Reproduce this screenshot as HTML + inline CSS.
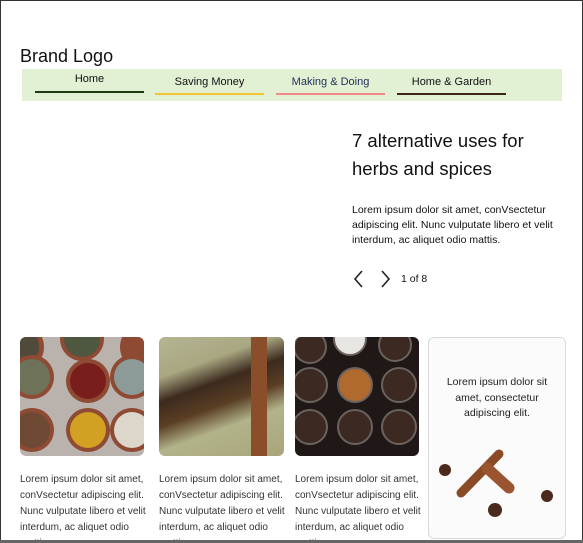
<!DOCTYPE html>
<html><head><style>
*{margin:0;padding:0;box-sizing:border-box}
body{width:583px;height:543px;overflow:hidden;background:#fff;font-family:"Liberation Sans",sans-serif;color:#111;position:relative}
.frame{position:absolute;left:0;top:0;width:583px;height:541px;border:1px solid #333;border-bottom:none}
.bot{position:absolute;left:0;top:540px;width:583px;height:3px;background:#666}
.abs{position:absolute}
.logo{left:20px;top:46px;font-size:18px}
.nav{left:22px;top:69px;width:540px;height:32px;background:#e2f0d4}
.ni{position:absolute;top:6px;width:109px;text-align:center;font-size:11px;height:20px;border-bottom:2px solid}
.t{left:352px;top:127px;font-size:18.5px;line-height:28px;width:200px}
.p{left:352px;top:203px;font-size:10.5px;line-height:15px;width:210px}
.img{top:337px;height:119px;border-radius:6px;overflow:hidden}
.cap{top:472px;font-size:10px;line-height:16px;color:#333;width:128px;height:68px;overflow:hidden}
</style></head><body>
<div class="frame"></div>
<div class="abs logo">Brand Logo</div>
<div class="abs nav">
<div class="ni" style="left:13px;border-color:#1a3a12;top:4px">Home</div>
<div class="ni" style="left:133px;border-color:#f2c531;top:7px;height:19px">Saving Money</div>
<div class="ni" style="left:254px;border-color:#f08a8a;color:#1e2e5a;top:7px;height:19px">Making &amp; Doing</div>
<div class="ni" style="left:375px;border-color:#3b2318;top:7px;height:19px">Home &amp; Garden</div>
</div>
<div class="abs t">7 alternative uses for herbs and spices</div>
<div class="abs p">Lorem ipsum dolor sit amet, conVsectetur adipiscing elit. Nunc vulputate libero et velit interdum, ac aliquet odio mattis.</div>
<svg class="abs" style="left:350px;top:269px" width="50" height="20"><path d="M12 2 L5 10 L12 18" fill="none" stroke="#222" stroke-width="1.6"/><path d="M32 2 L39 10 L32 18" fill="none" stroke="#222" stroke-width="1.6"/></svg>
<div class="abs" style="left:401px;top:273px;font-size:10.5px">1 of 8</div>

<div class="abs img" style="left:20px;width:124px;background:#b9b2ad">
<svg width="124" height="119"><g>
<circle cx="0" cy="10" r="24" fill="#8e4a32"/><circle cx="0" cy="10" r="19" fill="#4f4a3a"/>
<circle cx="62" cy="2" r="22" fill="#8e4a32"/><circle cx="62" cy="2" r="18" fill="#4e5740"/>
<circle cx="124" cy="10" r="24" fill="#8e4a32"/>
<circle cx="12" cy="40" r="22" fill="#8e4a32"/><circle cx="12" cy="40" r="18" fill="#6d7258"/>
<circle cx="68" cy="44" r="22" fill="#8e4a32"/><circle cx="68" cy="44" r="18" fill="#7a1e1c"/>
<circle cx="112" cy="40" r="22" fill="#8e4a32"/><circle cx="112" cy="40" r="18" fill="#8c9a98"/>
<circle cx="12" cy="93" r="22" fill="#8e4a32"/><circle cx="12" cy="93" r="18" fill="#6e4a35"/>
<circle cx="68" cy="93" r="22" fill="#8e4a32"/><circle cx="68" cy="93" r="18" fill="#d2a022"/>
<circle cx="112" cy="93" r="22" fill="#8e4a32"/><circle cx="112" cy="93" r="18" fill="#ddd6ca"/>
</g></svg></div>
<div class="abs img" style="left:159px;width:125px;background:linear-gradient(160deg,#b5b592 0%,#a9a782 25%,#3c2a1e 40%,#5a3e24 55%,#b2b38a 70%,#a9a57a 100%)">
<div class="abs" style="left:92px;top:0;width:16px;height:119px;background:#8a4e2b"></div></div>
<div class="abs img" style="left:295px;width:124px;background:#1f1816">
<svg width="124" height="119"><g fill="#3c2a22" stroke="#6a625e" stroke-width="2">
<circle cx="15" cy="10" r="16"/><circle cx="55" cy="2" r="16" fill="#e8e6e2"/><circle cx="100" cy="8" r="16"/>
<circle cx="15" cy="48" r="17"/><circle cx="60" cy="48" r="17" fill="#b06a2e"/><circle cx="104" cy="48" r="17"/>
<circle cx="15" cy="90" r="17"/><circle cx="60" cy="90" r="17"/><circle cx="104" cy="90" r="17"/></g></svg></div>
<div class="abs cap" style="left:20px">Lorem ipsum dolor sit amet, conVsectetur adipiscing elit. Nunc vulputate libero et velit interdum, ac aliquet odio mattis.</div>
<div class="abs cap" style="left:159px">Lorem ipsum dolor sit amet, conVsectetur adipiscing elit. Nunc vulputate libero et velit interdum, ac aliquet odio mattis.</div>
<div class="abs cap" style="left:295px">Lorem ipsum dolor sit amet, conVsectetur adipiscing elit. Nunc vulputate libero et velit interdum, ac aliquet odio mattis.</div>

<div class="abs" style="left:428px;top:337px;width:138px;height:202px;border:1px solid #d8d8d8;border-radius:6px;background:#fbfbfb;overflow:hidden">
<div style="position:absolute;top:37px;left:12px;width:112px;text-align:center;font-size:10.5px;line-height:15.5px;color:#222">Lorem ipsum dolor sit amet, consectetur adipiscing elit.</div>
<svg style="position:absolute;left:0;top:100px" width="138" height="100">
<g stroke-linecap="round"><line x1="32" y1="55" x2="70" y2="16" stroke="#8a4a25" stroke-width="9"/>
<line x1="58" y1="30" x2="80" y2="50" stroke="#9a5530" stroke-width="11"/></g>
<g fill="#4a2a1c"><circle cx="16" cy="32" r="6"/><circle cx="118" cy="58" r="6"/><circle cx="66" cy="72" r="7"/></g>
</svg></div>
<div class="bot"></div>
</body></html>
